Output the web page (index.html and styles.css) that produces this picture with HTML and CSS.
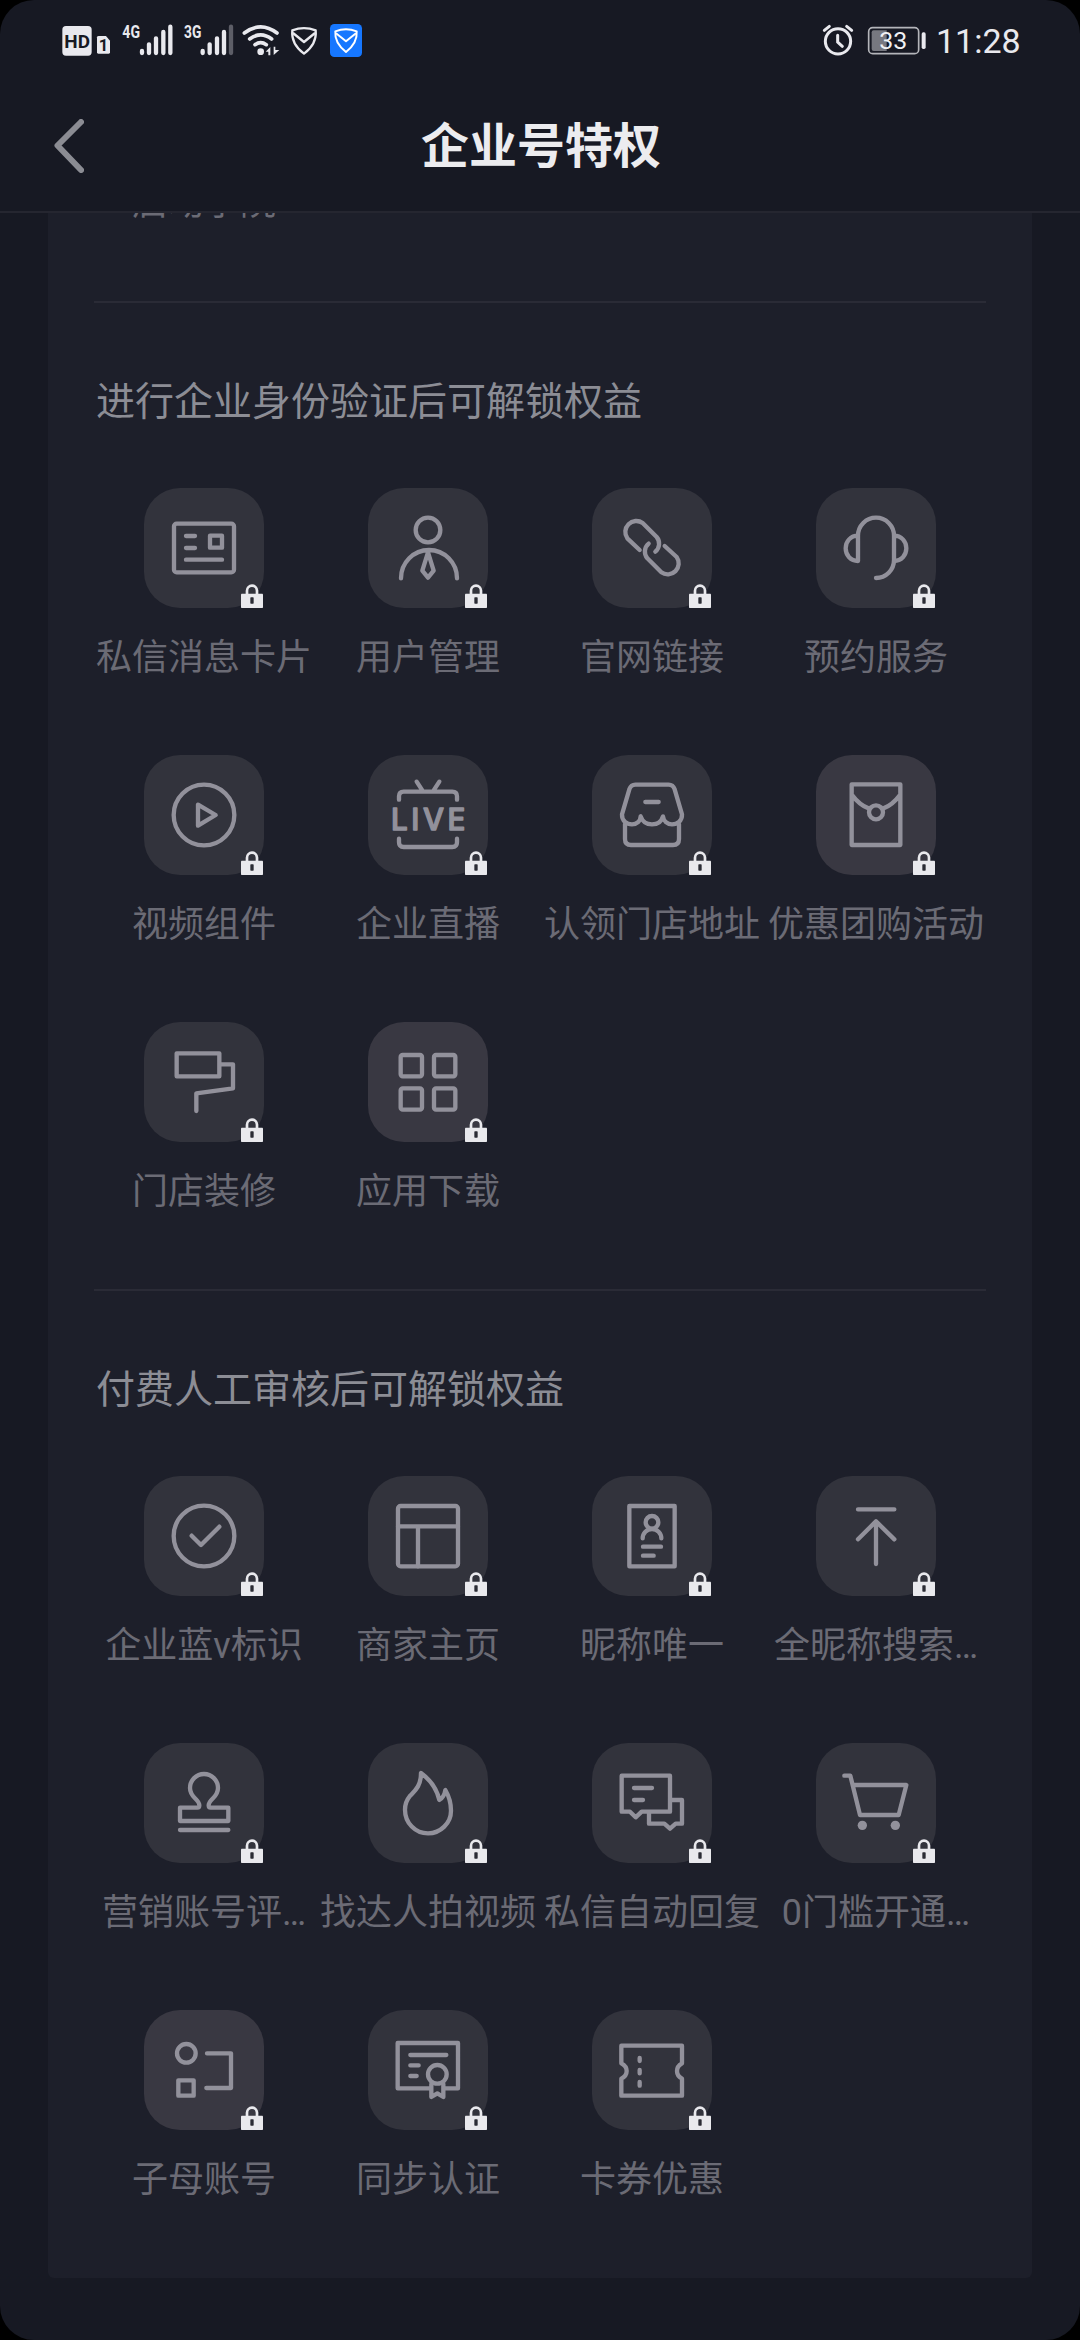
FILE: index.html
```html
<!DOCTYPE html>
<html lang="zh-CN">
<head>
<meta charset="utf-8">
<title>企业号特权</title>
<link rel="stylesheet" href="styles.css">
</head>
<body>
<svg class="defs" aria-hidden="true">
  <symbol id="lock" viewBox="0 0 66 72">
    <path d="M18 32V20a15 15 0 0 1 30 0v12" fill="none" stroke="#e9e9ed" stroke-width="8"/>
    <path d="M2 29h62a2 2 0 0 1 2 2v39a2 2 0 0 1-2 2H2a2 2 0 0 1-2-2V31a2 2 0 0 1 2-2z" fill="#e9e9ed"/>
    <rect x="28" y="40" width="10" height="19" rx="2" fill="#2b2c35"/>
  </symbol>
</svg>
<div class="screen">
  <header class="status-bar">
    <svg class="status-left" viewBox="180 66 912 108">
      <rect x="187" y="78" width="88" height="89" rx="11" fill="#e9e9ee"/>
      <text x="193" y="143" class="hd" textLength="77" lengthAdjust="spacingAndGlyphs">HD</text>
      <path d="M296 108h22l12 14v35q0 4-4 4h-31q-4 0-4-4v-45q0-4 5-4z" fill="#e9e9ee"/>
      <text x="296" y="153" class="sim">1</text>
      <text x="367" y="115" class="net" textLength="53" lengthAdjust="spacingAndGlyphs">4G</text>
      <text x="552" y="115" class="net" textLength="52" lengthAdjust="spacingAndGlyphs">3G</text>
      <g stroke="#e9e9ee" stroke-width="13" stroke-linecap="round">
        <path d="M426 153v6M447 133v26M468 115v44M490 96v63M511 80v79"/>
        <path d="M608 153v6M629 133v26M651 115v44M672 96v63"/>
        <path d="M693 80v79" stroke="#5d5e67"/>
      </g>
      <g fill="none" stroke="#e9e9ee" stroke-width="11" stroke-linecap="round">
        <path d="M733 99Q782 62 831 99M749 117Q782 92 815 117M765 134Q782 122 799 134"/>
      </g>
      <circle cx="782" cy="155" r="10" fill="#e9e9ee"/>
      <path d="M797 155l14-14v25h-6v-11zM821 165v-25h5v10h12z" fill="#e9e9ee"/>
      <g fill="none" stroke="#e9e9ee" stroke-width="7" stroke-linejoin="round">
        <path d="M877 91Q912 78 947 91Q951 132 912 161Q873 132 877 91z"/>
        <path d="M879 99L912 126L945 99"/>
      </g>
      <rect x="990" y="72" width="96" height="99" rx="13" fill="#1677ff"/>
      <g fill="none" stroke="#fff" stroke-width="6" stroke-linejoin="round">
        <path d="M1006 94Q1038 81 1070 94Q1073 128 1038 156Q1003 128 1006 94z"/>
        <path d="M1008 100L1038 124L1068 100"/>
      </g>
    </svg>
    <div class="status-right">
      <svg class="alarm-battery" viewBox="120 66 321 108">
        <circle cx="171" cy="124" r="38" fill="none" stroke="#e9e9ee" stroke-width="9"/>
        <path d="M170 106v20l14 13M130 91l15-12M197 79l15 12" fill="none" stroke="#e9e9ee" stroke-width="9" stroke-linecap="round"/>
        <rect x="263" y="83" width="150" height="78" rx="12" fill="none" stroke="#b4b5ba" stroke-width="5"/>
        <path d="M278 91h39v62h-39q-6 0-6-6V97q0-6 6-6z" fill="#777880"/>
        <rect x="422" y="97" width="12" height="50" rx="5" fill="#e9e9ee"/>
        <text x="295" y="147" class="charge" textLength="84" lengthAdjust="spacingAndGlyphs">33</text>
      </svg>
      <span class="clock">11:28</span>
    </div>
  </header>
  <nav class="nav-bar">
    <svg class="back" viewBox="0 0 30 54"><path d="M27 3L3.500 26.500L27 51" fill="none" stroke="#8b8c93" stroke-width="6" stroke-linecap="round" stroke-linejoin="round"/></svg>
    <h1 class="title">企业号特权</h1>
  </nav>
  <main class="viewport">
    <div class="panel">
      <div class="grid clipped-row"><div class="item"><span class="label">启动学院</span></div></div>
      <section class="section">
        <h2 class="heading">进行企业身份验证后可解锁权益</h2>
        <div class="grid">
          <div class="item">
            <svg class="tile" viewBox="0 0 360 360"><rect x="90" y="107" width="180" height="146" rx="8"/><path d="M126 144h27M126 180h27M126 215h108M198 143h36v36h-36z"/><use href="#lock" x="291" y="288" width="66" height="72"/></svg>
            <span class="label">私信消息卡片</span>
          </div>
          <div class="item">
            <svg class="tile" viewBox="0 0 360 360"><circle cx="180" cy="126" r="37"/><path d="M99 271A81 82 0 0 1 267 271M180 193L163 248L180 269L197 248z"/><use href="#lock" x="291" y="288" width="66" height="72"/></svg>
            <span class="label">用户管理</span>
          </div>
          <div class="item">
            <svg class="tile" viewBox="0 0 360 360"><path d="M143 186L106 151A33 33 0 0 1 152 105L194 147A31 31 0 0 1 190 191M218 174L254 207A33 33 0 0 1 208 253L166 211A31 31 0 0 1 170 167"/><use href="#lock" x="291" y="288" width="66" height="72"/></svg>
            <span class="label">官网链接</span>
          </div>
          <div class="item">
            <svg class="tile" viewBox="0 0 360 360"><path d="M126 219V143A54 54 0 0 1 234 143V216A54 54 0 0 1 180 270M126 143C104 143 89 160 89 181S104 219 126 219M234 143C256 143 271 160 271 181S256 219 234 219"/><use href="#lock" x="291" y="288" width="66" height="72"/></svg>
            <span class="label">预约服务</span>
          </div>
          <div class="item">
            <svg class="tile" viewBox="0 0 360 360"><circle cx="180" cy="180" r="91"/><path d="M162 149V212L215 180z"/><use href="#lock" x="291" y="288" width="66" height="72"/></svg>
            <span class="label">视频组件</span>
          </div>
          <div class="item">
            <svg class="tile" viewBox="0 0 360 360"><path d="M146 80L163 106M214 80L197 106M93 134V124Q93 110 107 110H253Q267 110 267 124V134M93 251V262Q93 276 107 276H253Q267 276 267 262V251"/><text x="69" y="226" class="live" textLength="223" lengthAdjust="spacing">LIVE</text><use href="#lock" x="291" y="288" width="66" height="72"/></svg>
            <span class="label">企业直播</span>
          </div>
          <div class="item">
            <svg class="tile" viewBox="0 0 360 360"><path d="M90 178L112 103Q117 89 130 89H230Q243 89 248 103L270 178C271 198 255 208 240 208C226 208 214 198 213 184C208 202 194 208 180 208S152 202 146 184C146 198 134 208 120 208C105 208 89 198 90 178zM99 207V252Q99 270 117 270H243Q261 270 261 252V207M160 141h40"/><use href="#lock" x="291" y="288" width="66" height="72"/></svg>
            <span class="label">认领门店地址</span>
          </div>
          <div class="item">
            <svg class="tile warm" viewBox="0 0 360 360"><path d="M107 88H253V270H107zM107 119Q132 152 158 160M253 119Q228 152 202 160"/><circle cx="180" cy="172" r="21"/><use href="#lock" x="291" y="288" width="66" height="72"/></svg>
            <span class="label">优惠团购活动</span>
          </div>
          <div class="item">
            <svg class="tile" viewBox="0 0 360 360"><path d="M98 94H226V163H98zM226 127H267V199L157 214V267"/><use href="#lock" x="291" y="288" width="66" height="72"/></svg>
            <span class="label">门店装修</span>
          </div>
          <div class="item">
            <svg class="tile warm" viewBox="0 0 360 360"><rect x="98" y="99" width="64" height="64" rx="6"/><rect x="198" y="99" width="64" height="64" rx="6"/><rect x="98" y="199" width="64" height="64" rx="6"/><rect x="198" y="199" width="64" height="64" rx="6"/><use href="#lock" x="291" y="288" width="66" height="72"/></svg>
            <span class="label">应用下载</span>
          </div>
        </div>
      </section>
      <section class="section">
        <h2 class="heading">付费人工审核后可解锁权益</h2>
        <div class="grid">
          <div class="item">
            <svg class="tile" viewBox="0 0 360 360"><circle cx="180" cy="180" r="91"/><path d="M143 179L171 207L226 152"/><use href="#lock" x="291" y="288" width="66" height="72"/></svg>
            <span class="label">企业蓝<span class="latin">v</span>标识</span>
          </div>
          <div class="item">
            <svg class="tile" viewBox="0 0 360 360"><rect x="90" y="90" width="180" height="181" rx="8"/><path d="M90 151H270M150 151V271"/><use href="#lock" x="291" y="288" width="66" height="72"/></svg>
            <span class="label">商家主页</span>
          </div>
          <div class="item">
            <svg class="tile" viewBox="0 0 360 360"><path d="M112 90H248V271H112zM152 187A28 28 0 0 1 208 187M153 212H207M153 239H185"/><circle cx="180" cy="139" r="19"/><use href="#lock" x="291" y="288" width="66" height="72"/></svg>
            <span class="label">昵称唯一</span>
          </div>
          <div class="item">
            <svg class="tile" viewBox="0 0 360 360"><path d="M126 100H235M180 136V264M126 190L180 136L235 190"/><use href="#lock" x="291" y="288" width="66" height="72"/></svg>
            <span class="label">全昵称搜索<span class="latin">…</span></span>
          </div>
          <div class="item">
            <svg class="tile" viewBox="0 0 360 360"><path d="M108 194H160Q166 194 166 187C166 168 138 165 138 135A42 42 0 0 1 222 135C222 165 194 168 194 187Q194 194 200 194H253V234H108zM108 261H253"/><use href="#lock" x="291" y="288" width="66" height="72"/></svg>
            <span class="label">营销账号评<span class="latin">…</span></span>
          </div>
          <div class="item">
            <svg class="tile" viewBox="0 0 360 360"><path d="M159 90C159 130 140 144 125 160C115 172 111 186 111 200C111 240 142 271 180 271C218 271 249 240 249 203C249 180 242 158 232 141C230 155 224 165 214 171C208 145 192 114 159 90z"/><use href="#lock" x="291" y="288" width="66" height="72"/></svg>
            <span class="label">找达人拍视频</span>
          </div>
          <div class="item">
            <svg class="tile" viewBox="0 0 360 360"><path d="M89 98H234V206H149L131 223L114 206H89zM126 135H180M126 171H153M234 171H270V242H251L234 257L217 242H171V206"/><use href="#lock" x="291" y="288" width="66" height="72"/></svg>
            <span class="label">私信自动回复</span>
          </div>
          <div class="item">
            <svg class="tile" viewBox="0 0 360 360"><path d="M85 98H103L132 216H248L271 126H111"/><circle cx="139" cy="247" r="14" class="solid"/><circle cx="238" cy="247" r="14" class="solid"/><use href="#lock" x="291" y="288" width="66" height="72"/></svg>
            <span class="label"><span class="latin">0</span>门槛开通<span class="latin">…</span></span>
          </div>
          <div class="item">
            <svg class="tile warm" viewBox="0 0 360 360"><circle cx="127" cy="130" r="28"/><path d="M103 211H149V257H103zM189 130H261V234H187"/><use href="#lock" x="291" y="288" width="66" height="72"/></svg>
            <span class="label">子母账号</span>
          </div>
          <div class="item">
            <svg class="tile" viewBox="0 0 360 360"><path d="M89 99H270V235H89zM127 135H235M127 166H152M127 198H146"/><path d="M190 222V261L208 250L226 261V222" class="cut"/><circle cx="208" cy="193" r="28" class="cut"/><use href="#lock" x="291" y="288" width="66" height="72"/></svg>
            <span class="label">同步认证</span>
          </div>
          <div class="item">
            <svg class="tile" viewBox="0 0 360 360"><path d="M88 107H270V160Q255 168 255 183T270 206V257H88V206Q104 198 104 183T88 160zM143 144V153M143 180V190M143 216V227"/><use href="#lock" x="291" y="288" width="66" height="72"/></svg>
            <span class="label">卡券优惠</span>
          </div>
        </div>
      </section>
    </div>
  </main>
</div>
</body>
</html>
```
FILE: styles.css
```css
* { box-sizing: border-box; }

body {
  margin: 0;
  background: #000;
  font-family: "Noto Sans CJK SC", sans-serif;
}

.defs { display: none; }

.screen {
  display: flex;
  flex-direction: column;
  width: 1080px;
  height: 2340px;
  overflow: hidden;
  border-radius: 34px;
  background: #171923;
}

.status-bar {
  display: flex;
  justify-content: space-between;
  height: 80px;
  padding: 22px 61px 0 60px;
}

.status-left { width: 304px; height: 36px; }
.status-right { display: flex; gap: 8px; }
.alarm-battery { width: 107px; height: 36px; }

.clock {
  width: 83px;
  color: #e9e9ee;
  font: 34px/38px Roboto, sans-serif;
  white-space: nowrap;
}

.hd { font: 700 56px Roboto, sans-serif; fill: #171923; }
.sim { font: 700 50px Roboto, sans-serif; fill: #171923; }
.net { font: 700 55px Roboto, sans-serif; fill: #e9e9ee; }
.charge { font: 400 74px Roboto, sans-serif; fill: #f1f1f4; }

.nav-bar {
  display: grid;
  grid-template-columns: 84px 1fr 82px;
  align-items: center;
  flex: none;
  height: 133px;
  border-bottom: 2px solid #252630;
}

.back { width: 30px; height: 54px; margin-left: 54px; }

.title {
  margin: 0 0 8px;
  color: #ececef;
  font-size: 48px;
  font-weight: 700;
  line-height: 72px;
  text-align: center;
}

.viewport { flex: 1; overflow: hidden; }

.panel {
  height: 2065px;
  margin: 0 48px;
  padding: 0 44px;
  overflow: hidden;
  border-radius: 0 0 6px 6px;
  background: #1d1f2a;
}

.grid {
  display: grid;
  grid-template-columns: repeat(4, 224px);
  row-gap: 77px;
}

.clipped-row { margin-top: -38px; height: 126px; }

.section {
  height: 988px;
  border-top: 2px solid transparent;
  border-image: linear-gradient(to right, transparent 4px, #2a2b36 4px, #2a2b36 892px, transparent 892px) 2;
}

.heading {
  margin: 67px 0 62px 4px;
  color: #8c8d95;
  font-size: 39px;
  font-weight: 400;
  line-height: 56px;
}

.item {
  display: flex;
  flex-direction: column;
  align-items: center;
}

.tile {
  width: 120px;
  height: 120px;
  margin-bottom: 22px;
  border-radius: 36px;
  overflow: visible;
  background: #32333c;
  fill: none;
  stroke: #92919b;
  stroke-width: 13;
  stroke-linecap: round;
  stroke-linejoin: round;
}

.tile.warm { background: #393842; }
.tile use { stroke: none; }
.tile .cut { fill: #32333c; }
.tile .solid { fill: #92919b; stroke: none; }

.live {
  fill: #92919b;
  stroke-width: 4;
  font: 500 89px Inter, sans-serif;
}

.label {
  color: #6b6b75;
  font-size: 36px;
  line-height: 48px;
  white-space: nowrap;
}

.latin {
  font-family: Roboto, sans-serif;
  line-height: 0;
}
```
